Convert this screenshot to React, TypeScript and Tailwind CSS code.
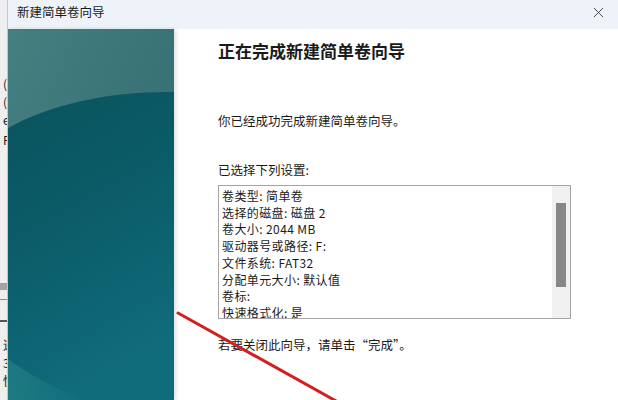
import { X } from "lucide-react"

const settings = [
  "卷类型: 简单卷",
  "选择的磁盘: 磁盘 2",
  "卷大小: 2044 MB",
  "驱动器号或路径: F:",
  "文件系统: FAT32",
  "分配单元大小: 默认值",
  "卷标:",
  "快速格式化: 是",
]

function BackWindow() {
  // sliver of the window lying behind the wizard
  return (
    <div className="flex h-full w-[8px] shrink-0 flex-col overflow-hidden border-r border-[#c9c9c9] bg-[#efefef] pl-[3px] text-[12px] leading-[18px] text-[#222]">
      <div className="mt-[75px]">(</div>
      <div>(</div>
      <div>e</div>
      <div className="mt-[2px]">F</div>
      <div className="-ml-[3px] mt-[134px] h-[7px] w-[8px] bg-[#a3a3a3]" />
      <div className="-ml-[3px] mt-[9px] h-px w-[8px] bg-[#8d8d8d]" />
      <div className="-ml-[3px] mt-[20px] h-[2px] w-[8px] bg-[#555]" />
      <div className="mt-[14px]">速</div>
      <div>3</div>
      <div>快</div>
    </div>
  )
}

function SidePanel() {
  return (
    <div className="h-full w-[166px] shrink-0 shadow-[2px_0_4px_rgba(0,0,0,0.12)]">
      <svg viewBox="0 0 166 371" preserveAspectRatio="none" className="block h-full w-full">
        <defs>
          <linearGradient id="top" x1="0" y1="0" x2="1" y2="1">
            <stop offset="0" stopColor="#467f80" />
            <stop offset="1" stopColor="#2e676d" />
          </linearGradient>
          <linearGradient id="body" x1="0" y1="0" x2="0.3" y2="1">
            <stop offset="0" stopColor="#0a535d" />
            <stop offset="0.5" stopColor="#0b5d69" />
            <stop offset="1" stopColor="#106b7b" />
          </linearGradient>
          <linearGradient id="sweep" x1="0" y1="0" x2="1" y2="0">
            <stop offset="0" stopColor="#2a8a8c" stopOpacity="0.55" />
            <stop offset="1" stopColor="#2a8a8c" stopOpacity="0" />
          </linearGradient>
        </defs>
        <rect width="166" height="371" fill="url(#top)" />
        <path d="M0 99 C 45 74, 105 62, 166 63 L166 371 L0 371 Z" fill="url(#body)" />
        <path d="M0 330 C 20 345, 50 362, 80 371 L0 371 Z" fill="url(#sweep)" />
      </svg>
    </div>
  )
}

export default function App() {
  return (
    <div className="relative flex h-[400px] w-[618px] overflow-hidden bg-white font-['Noto_Sans_CJK_SC',sans-serif] text-[#1b1b1b]">
      <BackWindow />
      <div className="flex min-w-0 flex-1 flex-col">
        <div className="flex h-[29px] shrink-0 items-start justify-between bg-[#eef3f9] pl-[9px] pr-[11px] pt-[3px]">
          <span className="text-[12.5px] leading-[18px]">新建简单卷向导</span>
          <X className="mt-[1px] h-[17px] w-[17px] text-[#333]" strokeWidth={1.25} />
        </div>
        <div className="flex flex-1">
          <SidePanel />
          <div className="flex flex-1 flex-col pl-[44px] pt-[12px]">
            <h1 className="text-[17px] font-bold leading-[20px]">正在完成新建简单卷向导</h1>
            <p className="mt-[51px] text-[12.5px] leading-[18px]">你已经成功完成新建简单卷向导。</p>
            <p className="mt-[31px] text-[12.5px] leading-[18px]">已选择下列设置:</p>
            <div className="mt-[6px] flex h-[134px] w-[353px] border border-[#a5a5a5] bg-white">
              <div className="flex-1 overflow-hidden pl-[3px] pt-[2px] text-[12px] leading-[16.7px] tracking-[0.4px]">
                {settings.map((s) => (
                  <div key={s} className="whitespace-nowrap">{s}</div>
                ))}
              </div>
              <div className="flex w-[18px] shrink-0 justify-center bg-[#f0f0f0] pt-[17px]">
                <div className="h-[84px] w-[10px] bg-[#878787]" />
              </div>
            </div>
            <p className="mt-[17px] text-[12.5px] leading-[18px]">若要关闭此向导，请单击“完成”。</p>
          </div>
        </div>
      </div>
      <svg className="pointer-events-none absolute left-0 top-0 h-[400px] w-[618px]" viewBox="0 0 618 400">
        <line x1="178" y1="313" x2="345" y2="406" stroke="#d3201f" strokeWidth="3" strokeLinecap="round" />
      </svg>
    </div>
  )
}
